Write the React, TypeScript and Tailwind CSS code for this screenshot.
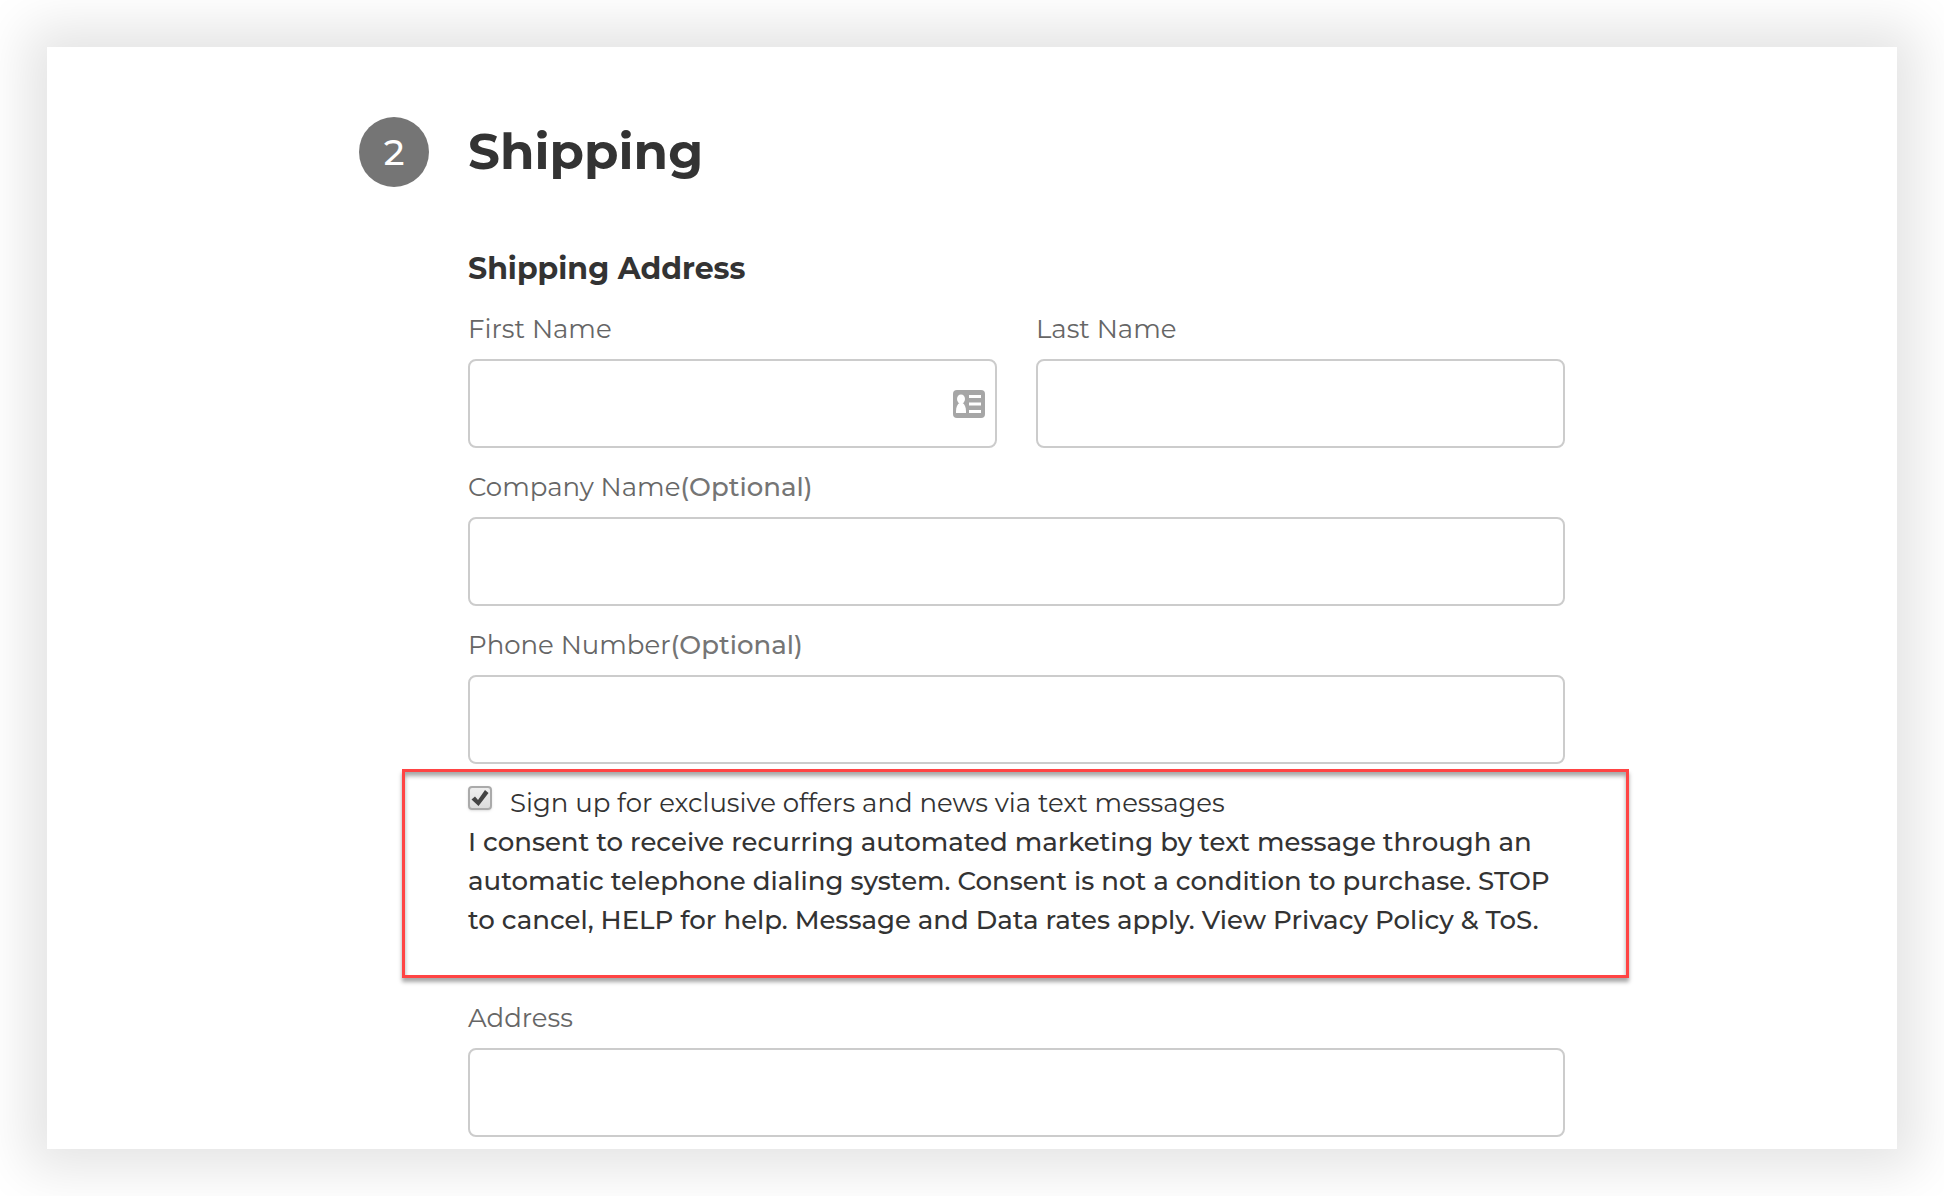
import { useState } from 'react';
import type { ReactNode } from 'react';
import clsx from 'clsx';

type FieldProps = {
    id: string;
    label: string;
    optional?: boolean;
    type?: string;
    icon?: ReactNode;
};

function ContactCardIcon() {
    return (
        <svg width="32" height="28" viewBox="0 0 32 28" aria-hidden="true">
            <rect width="32" height="28" rx="4" fill="#a6a6a6" />
            <ellipse cx="8" cy="9" rx="4" ry="4.5" fill="#fff" />
            <path d="M3 23v-2c0-4 1.5-7 3.5-8h3c2 1 3.5 4 3.5 8v2z" fill="#fff" />
            <path d="M16 5h12v3H16zM16 12.5h12v3H16zM16 20h12v3H16z" fill="#fff" />
        </svg>
    );
}

function Field({ id, label, optional, type = 'text', icon }: FieldProps) {
    return (
        <div className="min-w-0 flex-1">
            <label htmlFor={id} className="block text-[26px] leading-[39px] text-[#666]">
                {label}
                {optional && <span className="font-medium text-[#757575]">(Optional)</span>}
            </label>
            <div className="relative mt-2.5">
                <input
                    id={id}
                    name={id}
                    type={type}
                    className={clsx(
                        'block h-[89px] w-full rounded-lg border-2 border-[#ccc] bg-white px-5 text-[26px] text-[#333] outline-none focus:border-[#999]',
                        icon && 'pr-14'
                    )}
                />
                {icon && <span className="absolute top-[31px] right-3">{icon}</span>}
            </div>
        </div>
    );
}

function TextConsent() {
    const [checked, setChecked] = useState(true);

    return (
        <div className="-mt-[15px] -mr-16 mb-px -ml-[66px] border-3 border-[#ff4444] pt-3 pr-[61px] pb-[35px] pl-[63px] text-[26px] leading-[39px] text-[#333] shadow-[0_4px_4px_rgba(0,0,0,0.35),inset_0_4px_4px_rgba(0,0,0,0.35)]">
            <div className="flex items-start">
                <span className="relative mt-0.5 mr-[18px] h-6 w-6 shrink-0">
                    <input
                        id="smsConsent"
                        type="checkbox"
                        checked={checked}
                        onChange={e => setChecked(e.target.checked)}
                        className="block h-6 w-6 appearance-none rounded border-2 border-[#aaa] bg-linear-to-b from-[#eee] to-[#dcdcdc] shadow-sm"
                    />
                    {checked && (
                        <svg viewBox="0 0 24 24" className="pointer-events-none absolute inset-0 h-6 w-6" aria-hidden="true">
                            <path d="M3.500 13.500l3.500-3 3 3.500 7-10 3.500 3L10.500 20z" fill="#444" />
                        </svg>
                    )}
                </span>
                <label htmlFor="smsConsent">Sign up for exclusive offers and news via text messages</label>
            </div>
            <p className="font-medium">
                I consent to receive recurring automated marketing by text message through an
                automatic telephone dialing system. Consent is not a condition to purchase. STOP
                to cancel, HELP for help. Message and Data rates apply. View Privacy Policy &amp; ToS.
            </p>
        </div>
    );
}

export default function App() {
    return (
        <div className="bg-white p-[47px] font-['Montserrat','Inter',sans-serif]">
            <main className="bg-white pt-[70px] pr-83 pb-3 pl-78 shadow-[0_0_50px_20px_rgba(0,0,0,0.11)]">
                <header className="flex items-center gap-[39px]">
                    <span className="flex h-[70px] w-[70px] shrink-0 items-center justify-center rounded-full bg-[#757575] text-[36px] font-medium text-white">
                        2
                    </span>
                    <h1 className="text-[50px] leading-[70px] font-bold text-[#333]">Shipping</h1>
                </header>

                <form className="mt-[62px] ml-[109px]" onSubmit={e => e.preventDefault()}>
                    <h2 className="text-[30px] leading-[39px] font-bold text-[#333]">Shipping Address</h2>
                    <div className="mt-[22px] flex flex-col gap-5">
                        <div className="flex gap-[39px]">
                            <Field id="firstName" label="First Name" icon={<ContactCardIcon />} />
                            <Field id="lastName" label="Last Name" />
                        </div>
                        <Field id="company" label="Company Name" optional />
                        <Field id="phone" label="Phone Number" type="tel" optional />
                        <TextConsent />
                        <Field id="address" label="Address" />
                    </div>
                </form>
            </main>
        </div>
    );
}
